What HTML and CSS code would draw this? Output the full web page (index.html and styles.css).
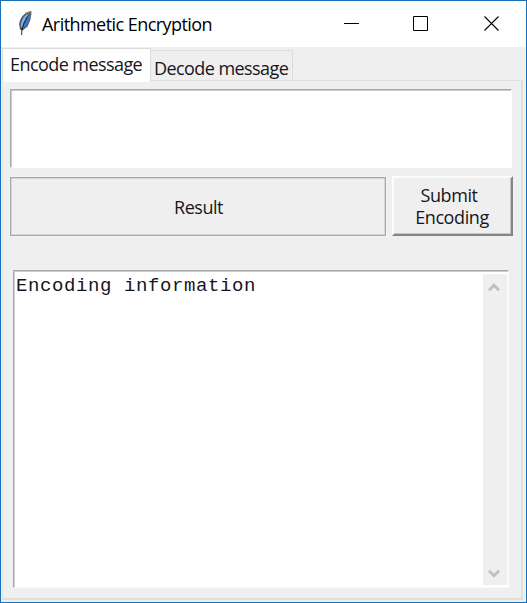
FILE: index.html
```html
<!DOCTYPE html>
<html lang="en">
<head>
<meta charset="utf-8">
<title>Arithmetic Encryption</title>
<link rel="stylesheet" href="styles.css">
</head>
<body>
<div class="window">
  <header class="titlebar">
    <svg class="feather" width="16" height="26" viewBox="0 0 16 26">
      <path d="M14.500 1.500C8 1.500 2.500 8 2.200 14.500l.8 5 2.500 1 5-4 3-7z" fill="#4a5058"/>
      <path d="M12.500 3C7 5 3.800 10 3.700 17l1.500 1C6 13 9 7 12.500 3z" fill="#7db4ee"/>
      <path d="M13.500 3.500l-1 6.500-3 6-4 3C7 13.500 10 8 13.500 3.500z" fill="#3c7ccb"/>
      <path d="M10.500 7L7 13l-2 6-.4 6" fill="none" stroke="#20242a" stroke-width="1"/>
      <path d="M8 3.500l5.500-2 .5 3.500" fill="none" stroke="#8a8a8a" stroke-width="1.200"/>
    </svg>
    <h1 class="title">Arithmetic Encryption</h1>
    <div class="controls">
      <svg width="16" height="16" viewBox="0 0 16 16"><path d="M0 7.5h15" stroke="#000"/></svg>
      <svg width="16" height="16" viewBox="0 0 16 16"><path d="M.5.5h14v14H.5z" fill="none" stroke="#000"/></svg>
      <svg width="16" height="16" viewBox="0 0 16 16"><path d="M.5.5l14 14M14.5.5l-14 14" stroke="#000" stroke-width="1.1"/></svg>
    </div>
  </header>
  <nav class="tabs">
    <div class="tab active">Encode message</div>
    <div class="tab">Decode message</div>
  </nav>
  <main class="panel">
    <div class="entry"></div>
    <div class="row">
      <div class="result">Result</div>
      <button class="submit"><span class="l1">Submit</span><span>Encoding</span></button>
    </div>
    <div class="info">
      <div class="text">Encoding information</div>
      <div class="scrollbar">
        <svg width="12" height="10" viewBox="0 0 12 10"><path d="M1 8.2l5-5 5 5" fill="none" stroke="#bfbfbf" stroke-width="2.8"/></svg>
        <svg width="12" height="10" viewBox="0 0 12 10"><path d="M1 1.8l5 5 5-5" fill="none" stroke="#bfbfbf" stroke-width="2.8"/></svg>
      </div>
    </div>
  </main>
</div>
</body>
</html>
```
FILE: styles.css
```css
* { box-sizing: border-box; }
body { margin: 0; font-family: "Open Sans", "Noto Sans", sans-serif; color: #16161c; }
.window { width: 527px; height: 603px; border: 1px solid #1a70b8; background: #efefef; display: flex; flex-direction: column; }
.titlebar { height: 46px; background: #fff; display: flex; flex: none; padding-left: 16px; }
.feather { margin-top: 9px; }
.title { margin: 0 0 0 9px; font-size: 18px; font-weight: 400; line-height: 47px; letter-spacing: -0.55px; color: #000; white-space: nowrap; }
.controls { margin: 15px 26px 0 auto; display: flex; }
.controls svg { display: block; margin-left: 53px; }
.controls svg:last-child { margin-left: 55px; }
.tabs { height: 34px; flex: none; display: flex; align-items: flex-end; padding-left: 1px; font-size: 18px; letter-spacing: -0.57px; white-space: nowrap; }
.tab { width: 142px; height: 31px; border: 1px solid #dcdcdc; border-left: 0; border-bottom: 0; line-height: 34px; padding-left: 3px; }
.tab.active { width: 149px; height: 34px; background: #fff; border: 1px solid #dcdcdc; border-bottom: 0; line-height: 31px; padding-left: 7px; position: relative; margin-bottom: -1px; }
.panel { flex: 1; margin: -1px 3px 2px 1px; border: 2px solid #dfdfdf; border-left: 1px solid #e6e6e6; border-top-width: 1px; padding: 8px 8px 0 7px; }
.entry { height: 79px; width: 502px; background: #fff; border: 1px solid; border-color: #aaa #fff #fff #aaa; box-shadow: inset 1px 1px #ccc; }
.row { display: flex; gap: 6px; margin-top: 8px; }
.result { width: 376px; height: 59px; margin-top: 1px; border: 1px solid #a5a5a5; outline: 1px solid #f6f6f6; box-shadow: inset 1px 1px #d8d8d8, inset -1px -1px #d8d8d8; font-size: 18px; line-height: 58px; text-align: center; letter-spacing: -0.5px; padding-left: 1px; }
.submit { width: 121px; height: 60px; padding: 6px 1px 0 0; background: #efefef; border: 2px solid; border-color: #fcfcfc #858585 #858585 #fcfcfc; box-shadow: inset -1px -1px #c4c4c4; font: 18px/22px "Open Sans", sans-serif; letter-spacing: -0.4px; color: #16161c; display: flex; flex-direction: column; align-items: center; justify-content: flex-start; }
.l1 { margin-right: 6px; }
.info { width: 496px; height: 318px; margin: 34px 0 0 3px; background: #fff; border: 1px solid; border-color: #aaa #fafafa #fafafa #aaa; box-shadow: inset 1px 1px #ccc; padding: 1px; display: flex; }
.text { flex: 1; font: 19px/29px "Liberation Mono", monospace; letter-spacing: 0.6px; padding-left: 1px; }
.scrollbar { width: 24px; margin: 2px 0 1px; background: #efefef; display: flex; flex-direction: column; justify-content: space-between; align-items: center; padding: 8px 2px 6px 0; }
```
